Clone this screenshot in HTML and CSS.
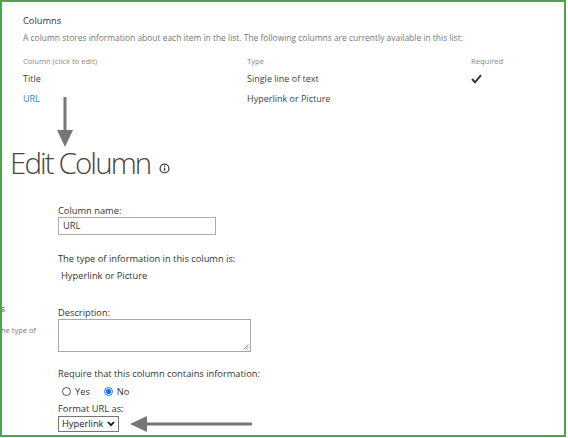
FILE: index.html
```html
<!DOCTYPE html>
<html>
<head>
<meta charset="utf-8">
<link rel="stylesheet" href="styles.css">
</head>
<body>
<div class="frame">
  <section class="columns">
    <h2 class="columns-title">Columns</h2>
    <p class="columns-desc">A column stores information about each item in the list. The following columns are currently available in this list:</p>
    <div class="col-table">
      <div class="th">Column (click to edit)</div>
      <div class="th">Type</div>
      <div class="th">Required</div>
      <div class="td">Title</div>
      <div class="td">Single line of text</div>
      <div class="td check-cell">
        <svg class="check" width="11" height="10" viewBox="0 0 11 10"><polyline points="1,5 4,8.3 10,1.2" fill="none" stroke="#333" stroke-width="2"/></svg>
      </div>
      <div class="td link">URL</div>
      <div class="td">Hyperlink or Picture</div>
      <div class="td"></div>
    </div>
  </section>

  <h1 class="edit-title">Edit Column
    <svg class="info" width="11" height="11" viewBox="0 0 11 11"><circle cx="5.5" cy="5.5" r="4.4" fill="none" stroke="#444" stroke-width="1.3"/><rect x="4.9" y="4.6" width="1.3" height="3.6" fill="#444"/><rect x="4.9" y="2.6" width="1.3" height="1.2" fill="#444"/></svg>
  </h1>

  <div class="form">
    <div class="side">
      <div class="side-line side-head"><span>Additional Column Settings</span></div>
      <div class="side-line side-text"><span>Specify detailed options for the type of</span></div>
    </div>
    <div class="fields">
      <div class="label">Column name:</div>
      <div class="input">URL</div>
      <div class="label type-label">The type of information in this column is:</div>
      <div class="type-value">Hyperlink or Picture</div>
      <div class="label desc-label">Description:</div>
      <div class="textarea">
        <svg class="grip" width="6" height="6" viewBox="0 0 6 6"><line x1="0.5" y1="5.5" x2="5.5" y2="0.5" stroke="#777" stroke-width="0.8"/><line x1="3" y1="5.5" x2="5.5" y2="3" stroke="#777" stroke-width="0.8"/></svg>
      </div>
      <div class="label req-label">Require that this column contains information:</div>
      <div class="radios">
        <span class="radio"></span><span class="radio-text">Yes</span>
        <span class="radio checked"></span><span class="radio-text">No</span>
      </div>
      <div class="label fmt-label">Format URL as:</div>
      <div class="select">Hyperlink
        <svg class="chev" width="8" height="6" viewBox="0 0 8 6"><polyline points="1,1 4,4.2 7,1" fill="none" stroke="#111" stroke-width="1.7"/></svg>
      </div>
    </div>
  </div>

  <svg class="arrow-down" width="18" height="52" viewBox="0 0 18 52"><rect x="7.5" y="0" width="3" height="34" fill="#777"/><polygon points="1,33 17,33 9,50" fill="#777"/></svg>
  <svg class="arrow-left" width="124" height="18" viewBox="0 0 124 18"><rect x="16" y="7.5" width="106" height="3" fill="#777"/><polygon points="0,9 17,1 17,17" fill="#777"/></svg>
</div>
</body>
</html>
```

FILE: styles.css
```css
html, body {
  margin: 0;
  padding: 0;
  background: #fff;
}
body {
  width: 568px;
  height: 438px;
  overflow: hidden;
  font-family: "Open Sans", "Noto Sans", sans-serif;
  color: #444;
}
.frame {
  position: relative;
  box-sizing: border-box;
  width: 566px;
  height: 437px;
  border: 2px solid #4ea548;
  overflow: hidden;
}
.columns {
  padding: 12px 0 0 21px;
}
.columns-title {
  margin: 0;
  font-size: 9.3px;
  font-weight: 400;
  line-height: 14px;
  color: #333;
}
.columns-desc {
  margin: 4px 0 0;
  font-size: 8.45px;
  line-height: 12px;
  color: #777;
  white-space: nowrap;
}
.col-table {
  display: grid;
  grid-template-columns: 224px 224px 60px;
  grid-template-rows: 14px 20px 20px;
  margin-top: 11px;
  align-items: center;
}
.th {
  font-size: 7.6px;
  color: #888;
  line-height: 12px;
  align-self: start;
}
.td {
  font-size: 9px;
  color: #444;
  line-height: 12px;
}
.link {
  color: #2a88b5;
}
.check-cell {
  display: flex;
  align-items: center;
}
.check { display: block; }

.edit-title {
  margin: 37px 0 0 8px;
  font-size: 29.5px;
  font-weight: 300;
  line-height: 34px;
  color: #444;
  display: flex;
  align-items: center;
  gap: 9px;
  letter-spacing: -1.9px;
}
.info { display: block; margin-top: 10px; }

.form {
  display: flex;
  margin-top: 25px;
}
.side {
  width: 56px;
  flex: none;
  overflow: hidden;
  padding-top: 97px;
}
.side-line {
  display: flex;
  justify-content: flex-end;
  white-space: nowrap;
}
.side-head {
  margin-right: 53px;
  font-size: 9.3px;
  line-height: 14px;
  color: #444;
}
.side-text {
  margin-right: 22px;
  margin-top: 9px;
  font-size: 7.5px;
  line-height: 10px;
  color: #777;
}
.fields {
  display: flex;
  flex-direction: column;
  align-items: flex-start;
}
.label {
  font-size: 9.3px;
  line-height: 12px;
  color: #333;
  white-space: nowrap;
}
.input {
  box-sizing: border-box;
  width: 158px;
  height: 18px;
  border: 1px solid #ababab;
  font-size: 9.3px;
  line-height: 16px;
  padding-left: 4px;
  color: #333;
}
.type-label { margin-top: 18px; }
.type-value {
  margin: 5px 0 0 3px;
  font-size: 9.3px;
  line-height: 12px;
  color: #333;
}
.desc-label { margin-top: 25px; }
.textarea {
  position: relative;
  box-sizing: border-box;
  width: 193px;
  height: 33px;
  border: 1px solid #a8a8a8;
}
.grip {
  position: absolute;
  right: 1px;
  bottom: 1px;
}
.req-label { margin-top: 16px; }
.radios {
  display: flex;
  align-items: center;
  height: 12px;
  margin-top: 5px;
  padding-left: 4px;
  font-size: 9.3px;
  color: #333;
}
.radio {
  box-sizing: border-box;
  width: 9px;
  height: 9px;
  border: 1px solid #555;
  border-radius: 50%;
  margin-right: 4px;
}
.radio.checked {
  border-color: #1a73e8;
  background: radial-gradient(circle, #1a73e8 0 2.3px, #fff 2.8px);
}
.radio-text { margin-right: 14px; }
.fmt-label { margin-top: 6px; }
.select {
  box-sizing: border-box;
  width: 61px;
  height: 16px;
  margin-top: 1px;
  border: 1px solid #767676;
  font-size: 9.3px;
  line-height: 14px;
  padding-left: 3px;
  color: #222;
  display: flex;
  align-items: center;
  gap: 3px;
}
.chev { display: block; }

.arrow-down {
  position: absolute;
  left: 54px;
  top: 95px;
}
.arrow-left {
  position: absolute;
  left: 128px;
  top: 413px;
}
```
